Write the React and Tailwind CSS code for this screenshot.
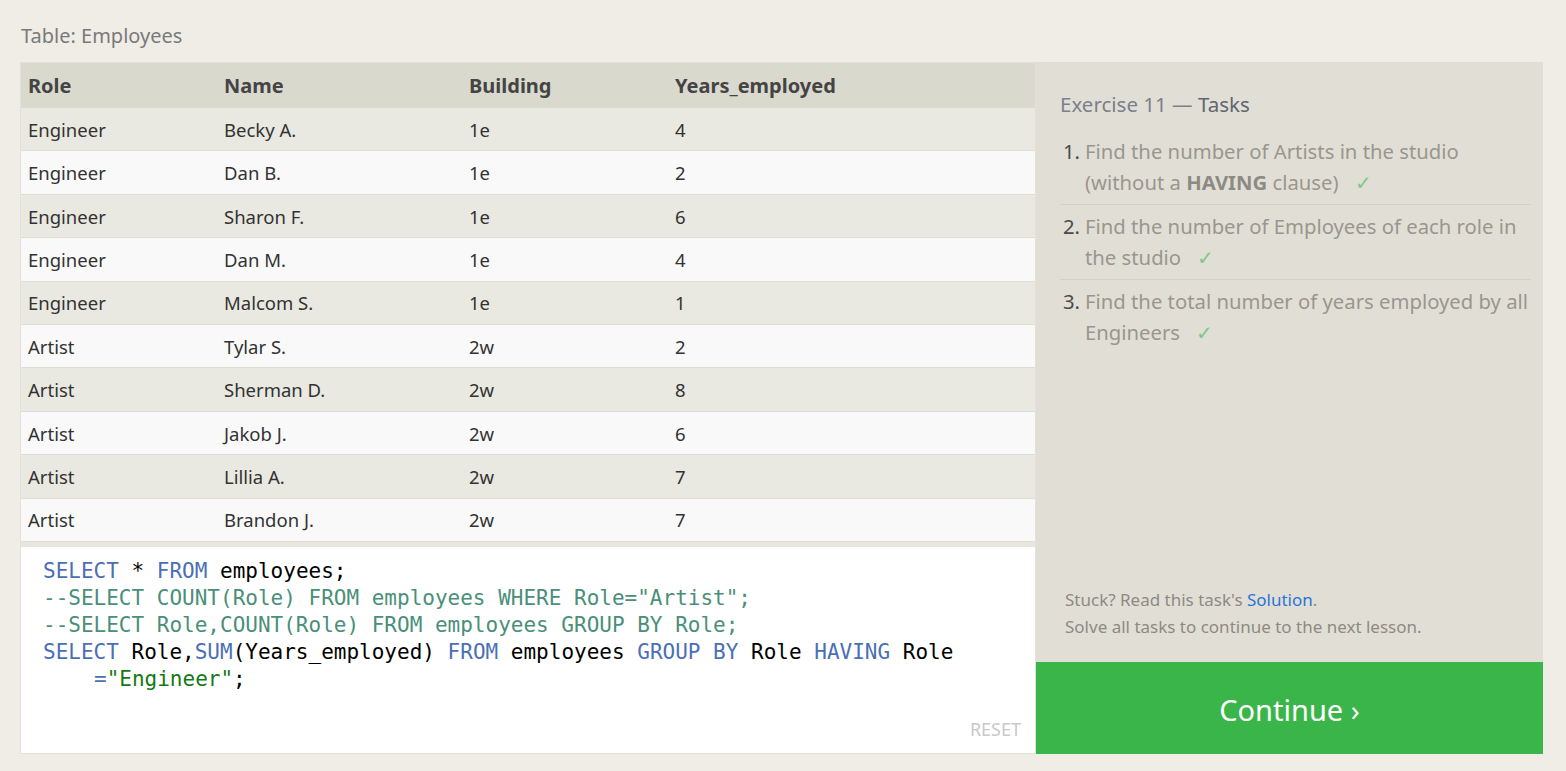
const rows = [
  ['Engineer', 'Becky A.', '1e', '4'],
  ['Engineer', 'Dan B.', '1e', '2'],
  ['Engineer', 'Sharon F.', '1e', '6'],
  ['Engineer', 'Dan M.', '1e', '4'],
  ['Engineer', 'Malcom S.', '1e', '1'],
  ['Artist', 'Tylar S.', '2w', '2'],
  ['Artist', 'Sherman D.', '2w', '8'],
  ['Artist', 'Jakob J.', '2w', '6'],
  ['Artist', 'Lillia A.', '2w', '7'],
  ['Artist', 'Brandon J.', '2w', '7'],
];

const sans = "font-['Noto_Sans','Open_Sans',sans-serif]";

const Cell = ({ children, w }) => <div className={`${w} pl-[7px]`}>{children}</div>;

const Check = () => <span className="ml-4 text-[#7fc98a]">✓</span>;

export default function App() {
  return (
    <div className={`min-h-screen bg-[#efede6] pl-5 pt-[22px] ${sans}`}>
      <div className="text-[20px] text-[#7a7a7a] leading-[28px] pl-px">Table: Employees</div>

      <div className="mt-[12px] flex h-[692px]">
        {/* left: table + editor */}
        <div className="w-[1016px] flex flex-col bg-[#e8e6df] border border-[#e3e1d9]">
          <div className="h-[484px] text-[18.5px] text-[#333]">
            <div className="flex items-center h-[45px] bg-[#dad9ce] font-bold text-[20px] text-[#444]">
              <Cell w="w-[196px]">Role</Cell>
              <Cell w="w-[245px]">Name</Cell>
              <Cell w="w-[206px]">Building</Cell>
              <Cell w="flex-1">Years_employed</Cell>
            </div>
            {rows.map((r, i) => (
              <div
                key={i}
                className={`flex items-center pt-px h-[43.4px] border-b border-[#dedcd4] ${i % 2 === 0 ? 'bg-[#e9e8e1]' : 'bg-[#f9f9f9]'}`}
              >
                <Cell w="w-[196px]">{r[0]}</Cell>
                <Cell w="w-[245px]">{r[1]}</Cell>
                <Cell w="w-[206px]">{r[2]}</Cell>
                <Cell w="flex-1">{r[3]}</Cell>
              </div>
            ))}
          </div>

          <div className="relative flex-1 bg-white pl-[22px] pt-[11px] font-['DejaVu_Sans_Mono','Liberation_Mono',monospace] text-[21px] leading-[27px] text-black">
            <div>
              <span className="text-[#4b6fb5]">SELECT</span> * <span className="text-[#4b6fb5]">FROM</span> employees;
            </div>
            <div className="text-[#4a8f7a]">--SELECT COUNT(Role) FROM employees WHERE Role="Artist";</div>
            <div className="text-[#4a8f7a]">--SELECT Role,COUNT(Role) FROM employees GROUP BY Role;</div>
            <div>
              <span className="text-[#4b6fb5]">SELECT</span> Role,<span className="text-[#4b6fb5]">SUM</span>(Years_employed){' '}
              <span className="text-[#4b6fb5]">FROM</span> employees <span className="text-[#4b6fb5]">GROUP BY</span> Role{' '}
              <span className="text-[#4b6fb5]">HAVING</span> Role
            </div>
            <div className="pl-[51px]">
              <span className="text-[#4b6fb5]">=</span>
              <span className="text-[#137a13]">"Engineer"</span>;
            </div>
            <div className={`absolute right-[14px] bottom-[10px] text-[18px] text-[#c9c9c9] ${sans}`}>RESET</div>
          </div>
        </div>

        {/* right: tasks + continue */}
        <div className="w-[507px] flex flex-col">
          <div className="flex-1 bg-[#e1dfd5] pl-6 pr-3 pt-[28px] flex flex-col">
            <div className="text-[20.5px] leading-[28px] text-[#7b808c]">
              Exercise 11 — <span className="text-[#60656f]">Tasks</span>
            </div>
            <ol className="mt-[18px] text-[20.3px] leading-[31px] text-[#9a968f]">
              <li className="flex pb-[6px] border-b border-[#d3d1c8]">
                <span className="w-[25px] pl-[3px] text-[#4a4a4a]">1.</span>
                <span className="flex-1">
                  Find the number of Artists in the studio (without a <b className="text-[#8d8a84]">HAVING</b> clause)
                  <Check />
                </span>
              </li>
              <li className="flex pt-[6px] pb-[6px] border-b border-[#d3d1c8]">
                <span className="w-[25px] pl-[3px] text-[#4a4a4a]">2.</span>
                <span className="flex-1">
                  Find the number of Employees of each role in the studio
                  <Check />
                </span>
              </li>
              <li className="flex pt-[6px]">
                <span className="w-[25px] pl-[3px] text-[#4a4a4a]">3.</span>
                <span className="flex-1">
                  Find the total number of years employed by all Engineers
                  <Check />
                </span>
              </li>
            </ol>
            <div className="mt-auto pb-[22px] pl-[5px] text-[17px] leading-[27px] text-[#8f8984]">
              <div>
                Stuck? Read this task's <span className="text-[#2b74d8]">Solution</span>.
              </div>
              <div>Solve all tasks to continue to the next lesson.</div>
            </div>
          </div>
          <div className="h-[92px] bg-[#3ab54a] flex items-center justify-center pt-[3px] text-white text-[29px]">
            Continue ›
          </div>
        </div>
      </div>
    </div>
  );
}
